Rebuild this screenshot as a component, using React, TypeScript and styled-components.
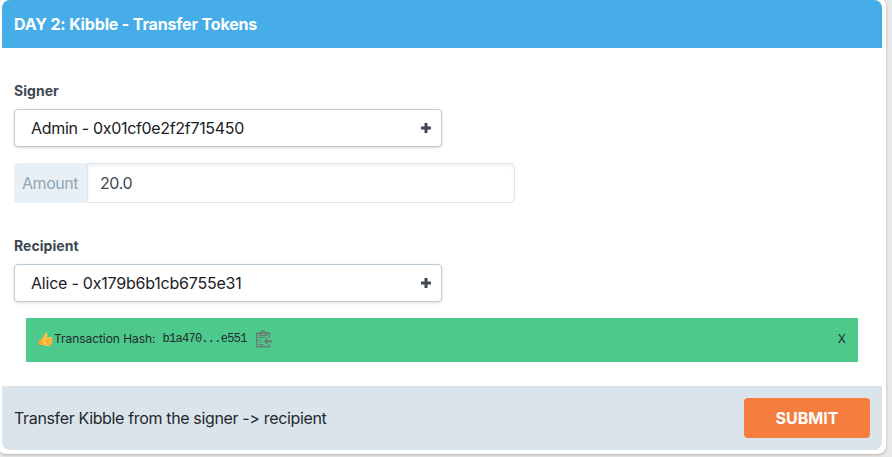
import React from 'react';
import styled, { createGlobalStyle } from 'styled-components';

const GlobalStyle = createGlobalStyle`
  *, *::before, *::after { box-sizing: border-box; }
  body {
    margin: 0;
    height: 457px;
    overflow: hidden;
    background: #e8e8e8;
    color: #22292f;
    font: 16px/24px Inter, sans-serif;
  }
  button, input { font: inherit; }
`;

const Card = styled.main`
  width: 888px;
  height: 456px;
  margin: -2px 0 0 -2px;
  padding: 2px 4px 4px;
  border-radius: 8px;
  background: #fff;
  box-shadow: 0 1px 3px rgba(0, 0, 0, 0.24);
`;

const Panel = styled.section`
  display: flex;
  flex-direction: column;
  height: 450px;
  border-radius: 8px;
  overflow: hidden;
`;

const Header = styled.header`
  height: 48px;
  padding: 12px;
  background: #47ade8;
  color: #fff;
  font-weight: 700;
`;

const Text = styled.span<{ $spacing: number }>`
  letter-spacing: ${(p) => p.$spacing}px;
  white-space: nowrap;
`;

const Body = styled.div`
  flex: 1;
  padding: 32px 12px 24px;
`;

const Label = styled.label`
  display: block;
  height: 21px;
  margin-bottom: 8px;
  color: #3d4852;
  font-size: 14px;
  font-weight: 700;
  line-height: 21px;
  letter-spacing: 0.05px;
`;

const Select = styled.button`
  display: flex;
  align-items: center;
  justify-content: space-between;
  width: 428px;
  height: 38px;
  padding: 0 9px 0 16px;
  border: 1px solid #bccad5;
  border-radius: 4px;
  background: #fff;
  color: #1b2025;
  box-shadow: 0 1px 3px rgba(0, 0, 0, 0.14);
`;

const AmountGroup = styled.div`
  display: flex;
  width: 501px;
  height: 40px;
  margin: 16px 0 32px;
`;

const Prefix = styled.span`
  width: 73px;
  padding: 8px;
  border-radius: 4px 0 0 4px;
  background: #e8eff5;
  color: #91a5b7;
  letter-spacing: -0.45px;
`;

const AmountInput = styled.input`
  flex: 1;
  min-width: 0;
  padding: 0 12px;
  border: 1px solid #dae4ed;
  border-radius: 0 4px 4px 0;
  background: #fff;
  color: #3d4852;
  letter-spacing: -0.4px;
  box-shadow: inset 0 2px 4px rgba(0, 0, 0, 0.06);
`;

const Alert = styled.div`
  display: flex;
  align-items: center;
  height: 44px;
  margin: 16px 12px 0;
  padding: 0 12px 2px;
  background: #4dca8b;
  font-size: 12px;
`;

const Hash = styled.code`
  margin: 0 8px 0 7px;
  font: 12px/18px "Liberation Mono", monospace;
  letter-spacing: -0.73px;
`;

const Dismiss = styled.button`
  margin-left: auto;
  padding: 0;
  border: 0;
  background: none;
  color: inherit;
  font-size: 12px;
`;

const Footer = styled.footer`
  display: flex;
  align-items: center;
  justify-content: space-between;
  height: 64px;
  padding: 0 12px;
  background: #dce4eb;
`;

const Submit = styled.button`
  width: 126px;
  height: 40px;
  border: 0;
  border-radius: 4px;
  background: #f57e3f;
  color: #fff;
  font-weight: 700;
`;

const Plus = () => (
  <svg width="12" height="12" viewBox="0 0 12 12">
    <path d="M4.5 1h3v3.5H11v3H7.5V11h-3V7.5H1v-3h3.5z" fill="#3d4852" />
  </svg>
);

const ThumbsUp = () => (
  <svg width="16" height="16" viewBox="0 0 16 16">
    <path d="M1 9.3 4.2 7.7 7.3 2Q7.8.7 9 1.6q1 1-.1 4.6h4.2q1.5 0 1.5 1.3 0 1-.8 1.2.9.4.7 1.4-.1.8-.9 1 .6.5.3 1.3-.2.7-1 .9.4.6 0 1.1-.3.5-1.2.5H8q-1.6 0-3-1.1L1 14z" fill="#ffc144" />
    <path d="M1 9.3 4.2 7.7 5 13.8 1 14z" fill="#f7a52c" />
    <path d="M9 8.7h4.8M9 11.1h4.5M9 13.3h3.8M8.8 8.7v5" fill="none" stroke="#e5942a" strokeWidth=".6" />
  </svg>
);

const CopyIcon = () => (
  <svg width="18" height="20" viewBox="0 0 18 20" fill="none" stroke="#6a7c6f" strokeWidth="1.5">
    <path d="M14.3 9V4.2H1.7v13.6h12.6v-2.3" />
    <path d="M4.5 6.5V4.2h1.7Q6.3 2 8 2t1.8 2.2h1.7v2.3z" />
    <path d="M3.7 8.5h7M3.7 11h3M3.7 13.3h3M3.7 15.6h5" strokeWidth="1.1" />
    <path d="M17.4 12.4h-5" strokeWidth="2.2" />
    <path d="m12.7 8.7-4.2 3.7 4.2 3.7z" fill="#6a7c6f" stroke="none" />
  </svg>
);

export default function App() {
  return (
    <>
      <GlobalStyle />
      <Card>
        <Panel>
          <Header><Text $spacing={-0.16}>DAY 2: Kibble - Transfer Tokens</Text></Header>
          <Body>
            <Label>Signer</Label>
            <Select><Text $spacing={-0.32}>Admin - 0x01cf0e2f2f715450</Text><Plus /></Select>
            <AmountGroup>
              <Prefix>Amount</Prefix>
              <AmountInput defaultValue="20.0" aria-label="Amount" />
            </AmountGroup>
            <Label>Recipient</Label>
            <Select><Text $spacing={-0.22}>Alice - 0x179b6b1cb6755e31</Text><Plus /></Select>
            <Alert>
              <ThumbsUp />
              <Text $spacing={-0.05}>Transaction Hash:</Text>
              <Hash>b1a470...e551</Hash>
              <CopyIcon />
              <Dismiss>X</Dismiss>
            </Alert>
          </Body>
          <Footer>
            <Text $spacing={-0.35}>Transfer Kibble from the signer -&gt; recipient</Text>
            <Submit>SUBMIT</Submit>
          </Footer>
        </Panel>
      </Card>
    </>
  );
}
